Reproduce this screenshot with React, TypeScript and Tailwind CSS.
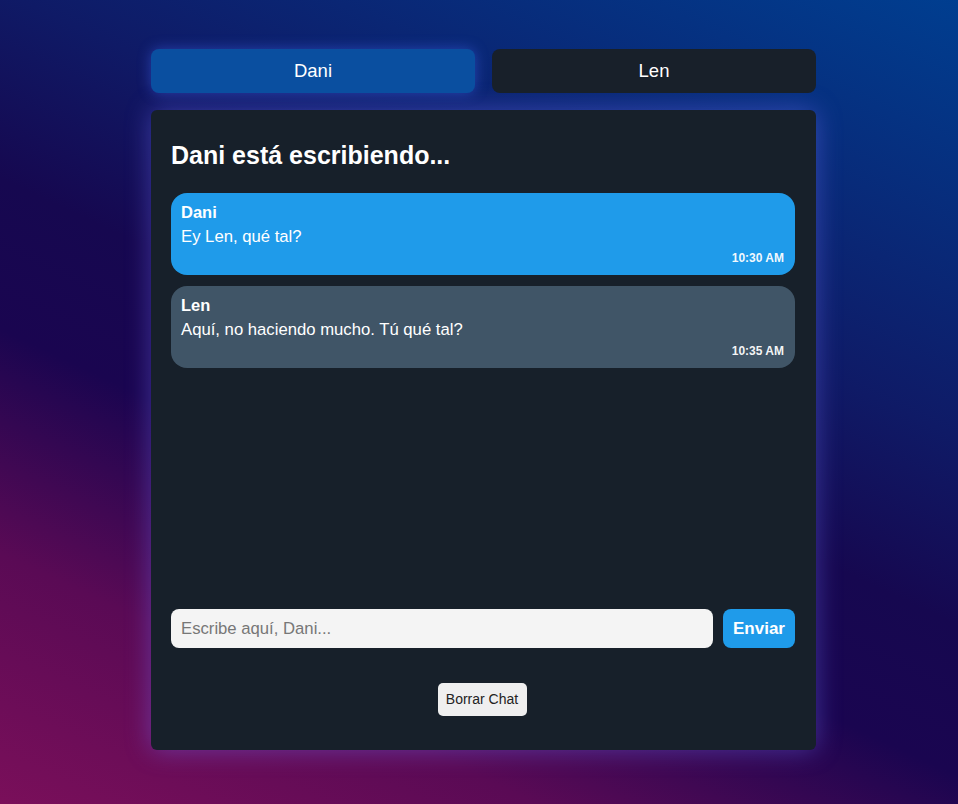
import React from "react";

type Msg = { name: string; text: string; time: string; mine: boolean };

const messages: Msg[] = [
  { name: "Dani", text: "Ey Len, qué tal?", time: "10:30 AM", mine: true },
  { name: "Len", text: "Aquí, no haciendo mucho. Tú qué tal?", time: "10:35 AM", mine: false },
];

export default function App() {
  return (
    <div className="min-h-screen w-full bg-[linear-gradient(25deg,#7a0f5a_0%,#5a0a55_20%,#1a0550_38%,#160850_50%,#0f1a66_65%,#003e90_100%)] font-['Liberation_Sans',Arial,sans-serif] text-white">
      <div className="pl-[151px] pt-[49px] pb-[54px]">
        <div className="w-[665px]">
          <div className="flex gap-[17px]">
            <button className="h-[44px] flex-1 rounded-[8px] bg-[#0a4fa0] text-[18.5px] text-white shadow-[0_0_14px_rgba(70,110,255,0.45)]">
              Dani
            </button>
            <button className="h-[44px] flex-1 rounded-[8px] bg-[#18202a] text-[18.5px] text-white">
              Len
            </button>
          </div>

          <div className="mt-[17px] flex h-[640px] flex-col rounded-[6px] bg-[#17202a] pl-5 pr-[21px] pt-[31px] pb-[34px] shadow-[0_0_26px_rgba(120,115,255,0.42)]">
            <h2 className="text-[25px] font-bold leading-[28px]">Dani está escribiendo...</h2>

            <div className="mt-[24px] flex h-[416px] flex-col gap-[11px]">
              {messages.map((m) => (
                <div
                  key={m.time}
                  className={
                    m.mine
                      ? "rounded-[16px] bg-[#1f9bea] px-[10px] py-[10px] pr-[11px]"
                      : "rounded-[16px] bg-[#405567] px-[10px] py-[10px] pr-[11px]"
                  }
                >
                  <div className="text-[16.5px] font-bold leading-[18px]">{m.name}</div>
                  <div className="mt-[7px] text-[16.7px] leading-[18px]">{m.text}</div>
                  <div className="mt-[5px] text-right text-[12px] font-bold leading-[14px] text-white/95">
                    {m.time}
                  </div>
                </div>
              ))}
            </div>

            <div className="flex h-[39px] gap-[10px]">
              <input
                className="h-[39px] flex-1 rounded-[8px] bg-[#f4f4f4] px-[10px] text-[16.7px] text-[#222] outline-none placeholder:text-[#777]"
                placeholder="Escribe aquí, Dani..."
              />
              <button className="h-[39px] w-[72px] rounded-[8px] bg-[#1f9bea] text-[17px] font-bold text-white">
                Enviar
              </button>
            </div>

            <div className="mt-[35px] flex justify-center">
              <button className="h-[33px] w-[89px] rounded-[5px] bg-[#efefef] text-[14px] text-[#222] ml-[-2px]">
                Borrar Chat
              </button>
            </div>
          </div>
        </div>
      </div>
    </div>
  );
}
